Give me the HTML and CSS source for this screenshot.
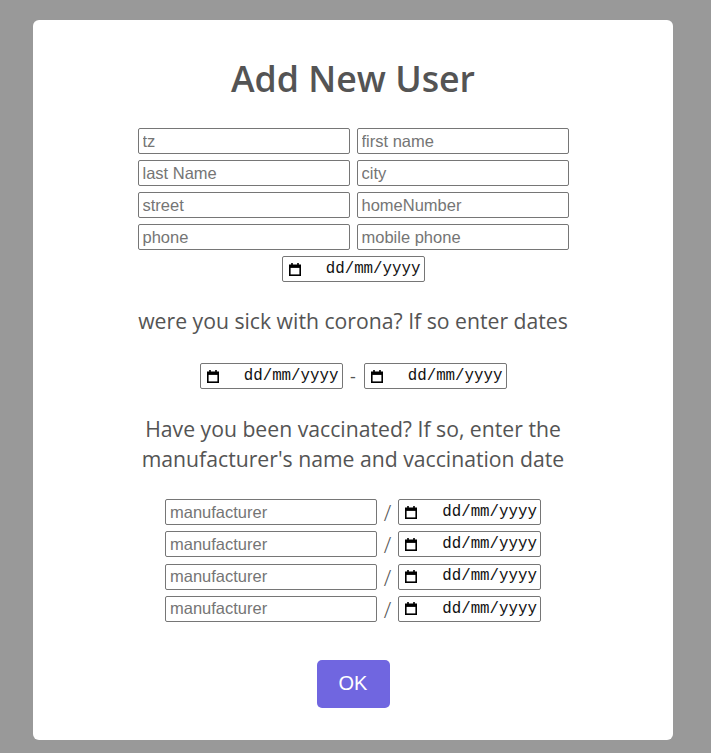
FILE: index.html
```html
<!DOCTYPE html>
<html lang="en">
<head>
<meta charset="utf-8">
<title>Add New User</title>
<link rel="stylesheet" href="styles.css">
</head>
<body>
<div class="dialog">
  <h2 class="title">Add New User</h2>
  <div class="personal">
    <div class="grid">
      <input class="field" type="text" placeholder="tz">
      <input class="field" type="text" placeholder="first name">
      <input class="field" type="text" placeholder="last Name">
      <input class="field" type="text" placeholder="city">
      <input class="field" type="text" placeholder="street">
      <input class="field" type="text" placeholder="homeNumber">
      <input class="field" type="text" placeholder="phone">
      <input class="field" type="text" placeholder="mobile phone">
    </div>
    <div class="date"><svg class="cal" viewBox="0 0 12 13"><path d="M3 0v3M9 0v3" stroke="#000" stroke-width="1.6"/><rect x="0.8" y="2.3" width="10.4" height="9.9" fill="none" stroke="#000" stroke-width="1.6"/><rect x="0.8" y="2.3" width="10.4" height="2.6" fill="#000"/></svg><span class="dtext">dd/mm/yyyy</span></div>
  </div>
  <p class="question sick">were you sick with corona? If so enter dates</p>
  <div class="range">
    <div class="date"><svg class="cal" viewBox="0 0 12 13"><path d="M3 0v3M9 0v3" stroke="#000" stroke-width="1.6"/><rect x="0.8" y="2.3" width="10.4" height="9.9" fill="none" stroke="#000" stroke-width="1.6"/><rect x="0.8" y="2.3" width="10.4" height="2.6" fill="#000"/></svg><span class="dtext">dd/mm/yyyy</span></div>
    <span class="sep dash">-</span>
    <div class="date"><svg class="cal" viewBox="0 0 12 13"><path d="M3 0v3M9 0v3" stroke="#000" stroke-width="1.6"/><rect x="0.8" y="2.3" width="10.4" height="9.9" fill="none" stroke="#000" stroke-width="1.6"/><rect x="0.8" y="2.3" width="10.4" height="2.6" fill="#000"/></svg><span class="dtext">dd/mm/yyyy</span></div>
  </div>
  <p class="question vacc">Have you been vaccinated? If so, enter the manufacturer's name and vaccination date</p>
  <div class="vaccines">
    <div class="vrow">
      <input class="field" type="text" placeholder="manufacturer">
      <span class="sep slash">/</span>
      <div class="date"><svg class="cal" viewBox="0 0 12 13"><path d="M3 0v3M9 0v3" stroke="#000" stroke-width="1.6"/><rect x="0.8" y="2.3" width="10.4" height="9.9" fill="none" stroke="#000" stroke-width="1.6"/><rect x="0.8" y="2.3" width="10.4" height="2.6" fill="#000"/></svg><span class="dtext">dd/mm/yyyy</span></div>
    </div>
    <div class="vrow">
      <input class="field" type="text" placeholder="manufacturer">
      <span class="sep slash">/</span>
      <div class="date"><svg class="cal" viewBox="0 0 12 13"><path d="M3 0v3M9 0v3" stroke="#000" stroke-width="1.6"/><rect x="0.8" y="2.3" width="10.4" height="9.9" fill="none" stroke="#000" stroke-width="1.6"/><rect x="0.8" y="2.3" width="10.4" height="2.6" fill="#000"/></svg><span class="dtext">dd/mm/yyyy</span></div>
    </div>
    <div class="vrow">
      <input class="field" type="text" placeholder="manufacturer">
      <span class="sep slash">/</span>
      <div class="date"><svg class="cal" viewBox="0 0 12 13"><path d="M3 0v3M9 0v3" stroke="#000" stroke-width="1.6"/><rect x="0.8" y="2.3" width="10.4" height="9.9" fill="none" stroke="#000" stroke-width="1.6"/><rect x="0.8" y="2.3" width="10.4" height="2.6" fill="#000"/></svg><span class="dtext">dd/mm/yyyy</span></div>
    </div>
    <div class="vrow">
      <input class="field" type="text" placeholder="manufacturer">
      <span class="sep slash">/</span>
      <div class="date"><svg class="cal" viewBox="0 0 12 13"><path d="M3 0v3M9 0v3" stroke="#000" stroke-width="1.6"/><rect x="0.8" y="2.3" width="10.4" height="9.9" fill="none" stroke="#000" stroke-width="1.6"/><rect x="0.8" y="2.3" width="10.4" height="2.6" fill="#000"/></svg><span class="dtext">dd/mm/yyyy</span></div>
    </div>
  </div>
  <div class="actions">
    <button class="ok" type="button">OK</button>
  </div>
</div>
</body>
</html>
```
FILE: styles.css
```css
html, body {
  margin: 0;
  padding: 0;
}
body {
  background: #999999;
  font-family: "Open Sans", "Noto Sans", sans-serif;
  color: #545454;
  height: 753px;
  overflow: hidden;
}
.dialog {
  box-sizing: border-box;
  width: 640px;
  height: 720px;
  margin: 20px 0 0 33px;
  padding-top: 36px;
  background: #ffffff;
  border-radius: 6px;
  display: flex;
  flex-direction: column;
  align-items: center;
}
.title {
  margin: 0;
  font-size: 35.7px;
  line-height: 44px;
  font-weight: 600;
  color: #545454;
}
.personal {
  margin-top: 28px;
  display: flex;
  flex-direction: column;
  align-items: center;
  gap: 6px;
}
.grid {
  display: grid;
  grid-template-columns: 212px 212px;
  column-gap: 7px;
  row-gap: 6px;
}
.field {
  box-sizing: border-box;
  width: 212px;
  height: 26px;
  margin: 0;
  padding: 0 4px;
  border: 1px solid #767676;
  border-radius: 2px;
  font-family: "Liberation Sans", Arial, sans-serif;
  font-size: 16.5px;
  color: #000;
  background: #fff;
}
.field::placeholder {
  color: #757575;
}
.date {
  box-sizing: border-box;
  width: 143px;
  height: 26px;
  border: 1px solid #767676;
  border-radius: 2px;
  display: flex;
  align-items: center;
  justify-content: space-between;
  padding: 0 3px 0 6px;
  background: #fff;
}
.cal {
  width: 12px;
  height: 13px;
  display: block;
}
.dtext {
  font-family: "Liberation Mono", "DejaVu Sans Mono", monospace;
  font-size: 15.8px;
  color: #111;
  line-height: 1;
  padding-top: 1px;
}
.question {
  margin: 0;
  font-size: 21.2px;
  line-height: 30px;
  text-align: center;
  color: #545454;
}
.sick {
  margin-top: 24px;
}
.range {
  margin-top: 27px;
  display: flex;
  align-items: center;
}
.sep {
  font-family: "Open Sans", "Noto Sans", sans-serif;
  color: #545454;
  text-align: center;
}
.dash {
  width: 21px;
  font-size: 18px;
  line-height: 22px;
}
.vacc {
  margin-top: 25px;
  width: 450px;
}
.vaccines {
  margin-top: 25px;
  display: flex;
  flex-direction: column;
  gap: 6.33px;
}
.vrow {
  display: flex;
  align-items: center;
}
.slash {
  width: 21px;
  font-size: 22px;
  font-weight: 300;
  line-height: 26px;
}
.actions {
  margin-top: 38px;
}
.ok {
  width: 73px;
  height: 48px;
  border: none;
  border-radius: 5px;
  background: #7066e0;
  color: #ffffff;
  font-family: "Liberation Sans", Arial, sans-serif;
  font-size: 20px;
  padding: 0;
  cursor: pointer;
}
```
